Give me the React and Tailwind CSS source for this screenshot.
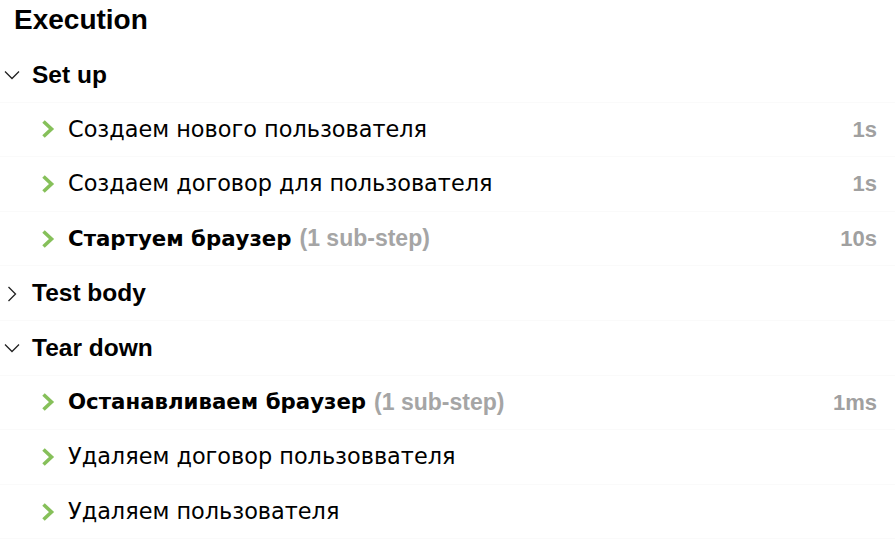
const groups = [
  {
    title: 'Set up',
    open: true,
    steps: [
      { name: 'Создаем нового пользователя', time: '1s' },
      { name: 'Создаем договор для пользователя', time: '1s' },
      { name: 'Стартуем браузер', sub: '(1 sub-step)', time: '10s', bold: true },
    ],
  },
  { title: 'Test body', open: false, steps: [] },
  {
    title: 'Tear down',
    open: true,
    steps: [
      { name: 'Останавливаем браузер', sub: '(1 sub-step)', time: '1ms', bold: true },
      { name: 'Удаляем договор пользовcomponent'.replace('component', 'вателя'), time: '' },
      { name: 'Удаляем пользователя', time: '' },
    ],
  },
];

function Chevron({ open }) {
  return (
    <svg width="16" height="16" viewBox="0 0 16 16" className="shrink-0">
      {open ? (
        <polyline points="1,4.5 8,11.5 15,4.5" fill="none" stroke="#222" strokeWidth="1.3" />
      ) : (
        <polyline points="4.5,1 11.5,8 4.5,15" fill="none" stroke="#222" strokeWidth="1.3" />
      )}
    </svg>
  );
}

function GreenArrow() {
  return (
    <svg width="14" height="20" viewBox="0 0 14 20" className="shrink-0">
      <polyline points="2.5,2.5 10.5,10 2.5,17.5" fill="none" stroke="#86c05a" strokeWidth="3.6" />
    </svg>
  );
}

export default function App() {
  return (
    <div
      className="h-[540px] w-[895px] overflow-hidden bg-white text-black"
      style={{ fontFamily: '"Liberation Sans", Arial, sans-serif' }}
    >
      <div className="flex h-[48px] items-start pl-[14px] pt-[4px] text-[28px] font-bold leading-[32px]">
        Execution
      </div>
      {groups.map((g) => (
        <div key={g.title}>
          <div className="flex h-[54.6px] items-center gap-[12px] border-b border-[#fafafa] pl-[4px] pt-[1px] text-[24.5px] font-bold">
            <Chevron open={g.open} />
            <span>{g.title}</span>
          </div>
          {g.open &&
            g.steps.map((s) => (
              <div
                key={s.name}
                className="flex h-[54.6px] items-center border-b border-[#fafafa] pl-[41px] pr-[18px] text-[22px]"
              >
                <GreenArrow />
                <span
                  className={`ml-[13px] ${s.bold ? 'text-[21.3px] font-bold' : 'text-[22.4px]'}`}
                  style={{ fontFamily: '"DejaVu Sans", sans-serif' }}
                >
                  {s.name}
                </span>
                {s.sub && (
                  <span className="ml-[8px] text-[23px] font-bold text-[#a5a5a5]">{s.sub}</span>
                )}
                <span className="ml-auto text-[22px] font-bold text-[#a0a0a0]">{s.time}</span>
              </div>
            ))}
        </div>
      ))}
    </div>
  );
}
